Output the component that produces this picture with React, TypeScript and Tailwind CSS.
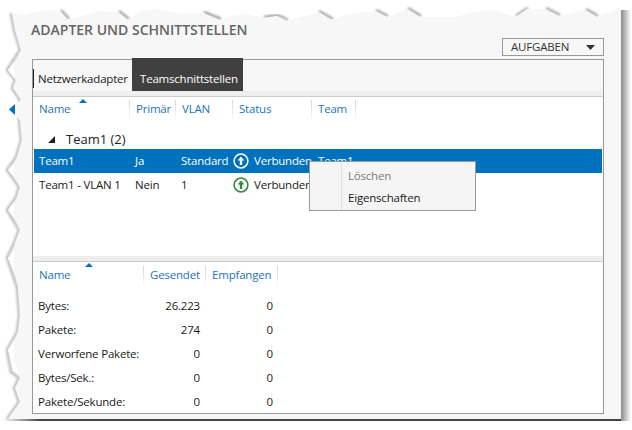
const font = "font-['Open_Sans','Liberation_Sans',sans-serif]";

const sheetEdge =
  "12,13 25,15 37,12 53,9 60,11 68,20 80,16 100,11 118,12 128,20 143,10 157,9 180,14 203,13 220,20 233,15 248,14 263,18 277,16 287,21 318,12 332,20 345,15 375,11 387,17 407,9 420,17 455,17 472,12 495,10 515,17 527,9 545,9 559,16 585,10 597,17 621,8 621,419 8,419 20,402 15,388 20,378 14,360 14,342 18,332 20,315 18,287 14,270 14,255 15,243 20,230 14,215 14,204 17,197 20,187 14,177 14,165 17,157 22,140 20,120 15,115 15,105 21,100 13,88 16,80 14,78 14,64 21,50 15,30";

const notches = [
  "14,62 8,70 14,78",
  "14,163 8,170 14,177",
  "14,202 8,210 14,218",
  "14,250 8,258 14,272",
  "14,340 8,350 14,372",
];

const topShadows = [
  "60,11 68,20",
  "118,12 128,20",
  "203,13 220,20",
  "263,18 277,16 287,21",
  "318,12 332,20",
  "375,11 387,17",
  "407,9 420,17",
  "515,17 527,9",
  "545,9 559,16",
  "585,10 597,17",
];

function TornSheet() {
  return (
    <svg className="absolute inset-0" width="632" height="430" viewBox="0 0 632 430">
      <defs>
        <filter id="soft" x="-20%" y="-20%" width="140%" height="140%">
          <feGaussianBlur stdDeviation="1.2" />
        </filter>
        <linearGradient id="rightShade" x1="0" x2="1" y1="0" y2="0">
          <stop offset="0" stopColor="#8a8a8a" />
          <stop offset="1" stopColor="#ffffff" />
        </linearGradient>
        <linearGradient id="bottomShade" x1="0" x2="1" y1="0" y2="0">
          <stop offset="0" stopColor="#ffffff" />
          <stop offset="0.06" stopColor="#444444" />
          <stop offset="1" stopColor="#444444" />
        </linearGradient>
      </defs>
      <rect x="621" y="10" width="10" height="411" fill="url(#rightShade)" />
      <rect x="3" y="419" width="618" height="2" fill="url(#bottomShade)" />
      <polyline
        points="12,13 15,30 21,50 8,70 16,80 13,88 21,100 20,120 22,140 17,157 8,170 20,187 17,197 8,210 20,230 15,243 8,258 18,287 20,315 18,332 8,350 12,372 20,378 15,388 20,402 8,419"
        fill="none"
        stroke="#b8b8b8"
        strokeWidth="2.5"
        filter="url(#soft)"
        transform="translate(-1 0)"
      />
      {topShadows.map((p) => (
        <polyline key={p} points={p} fill="none" stroke="#a0a0a0" strokeWidth="2.5" filter="url(#soft)" transform="translate(1 -1)" />
      ))}
      <polygon points={sheetEdge} fill="#f7f7f7" />
      {notches.map((p) => (
        <polygon key={p} points={p} fill="#ffffff" />
      ))}
      <polygon points="15,104 9,109.5 15,115" fill="#0072bc" />
    </svg>
  );
}

function ColHead({ label, width }: { label: string; width: string }) {
  return (
    <div className={`${width} flex shrink-0 justify-between pl-[6px] text-[#1b74bd]`}>
      <span className="whitespace-nowrap">{label}</span>
      <span className="w-px h-[22px] bg-gradient-to-b from-[#d4d4d4] to-white" />
    </div>
  );
}

function StatusIcon({ color }: { color: string }) {
  return (
    <svg width="16" height="16" viewBox="0 0 16 16" className="shrink-0">
      <circle cx="8" cy="8" r="6.9" fill="none" stroke={color} strokeWidth="1.5" />
      <path d="M8 3.6 L11.3 7.4 H9.2 V12 H6.8 V7.4 H4.7 Z" fill={color} />
    </svg>
  );
}

function TeamRow({ cells, selected }: { cells: string[]; selected?: boolean }) {
  return (
    <div className={`flex items-center h-6 shrink-0 pl-[5px] ${selected ? "bg-[#0072bd] text-white mx-px" : "text-[#1a1a1a] ml-px"}`}>
      <span className="w-[96px] whitespace-nowrap shrink-0">{cells[0]}</span>
      <span className="w-[46px] shrink-0">{cells[1]}</span>
      <span className="w-[52px] shrink-0">{cells[2]}</span>
      <StatusIcon color={selected ? "#ffffff" : "#2e8b38"} />
      <span className="ml-[5px] w-[64px] shrink-0">Verbunden</span>
      {selected && <span>Team1</span>}
    </div>
  );
}

function StatRow({ name, sent, recv }: { name: string; sent: string; recv: string }) {
  return (
    <div className="flex items-center h-6 pl-[5px] shrink-0 text-[#1a1a1a]">
      <span className="w-[105px] whitespace-nowrap shrink-0">{name}</span>
      <span className="w-[57px] text-right shrink-0">{sent}</span>
      <span className="w-[73px] text-right shrink-0">{recv}</span>
    </div>
  );
}

export default function App() {
  return (
    <div className={`relative w-[632px] h-[430px] overflow-hidden bg-white text-[11.5px] tracking-[-0.2px] ${font}`}>
      <TornSheet />
      <div className="relative flex flex-col h-full pl-[32px] pr-[28px] pt-[21px]">
        <h1 className="h-[18px] leading-[18px] text-[14px] font-semibold tracking-normal text-[#666666] -ml-px whitespace-nowrap">ADAPTER UND SCHNITTSTELLEN</h1>
        <div className="flex justify-end h-[18px] mt-[-1px]">
          <button className="flex items-center justify-between w-[102px] border border-[#999999] pl-[8px] pr-[8px] text-[#333333]">
            <span>AUFGABEN</span>
            <svg width="9" height="5" viewBox="0 0 9 5">
              <path d="M0 0 H9 L4.5 5 Z" fill="#333333" />
            </svg>
          </button>
        </div>
        <div className="relative flex flex-col h-[355px] mt-[3px] border border-[#999999] bg-white">
          <div className="flex h-[31px] shrink-0 bg-[#f7f7f7]">
            <div className="flex items-center h-[19px] mt-[9px] pl-[4px] w-[99px] border-l border-[#222222] whitespace-nowrap text-[#222222]">
              Netzwerkadapter
            </div>
            <div className="flex items-center w-[111px] h-[33px] -mt-[2px] pl-[8px] pt-[9px] bg-[#404040] text-white whitespace-nowrap">
              Teamschnittstellen
            </div>
          </div>
          <div className="h-[6px] shrink-0 bg-[#eeeeee] border-b border-[#cccccc]" />

          <div className="relative flex h-[25px] shrink-0 pt-[3px]">
            <ColHead label="Name" width="w-[97px]" />
            <ColHead label="Primär" width="w-[46px]" />
            <ColHead label="VLAN" width="w-[57px]" />
            <ColHead label="Status" width="w-[79px]" />
            <ColHead label="Team" width="w-[44px]" />
            <span className="absolute left-[46px] top-[2px] w-0 h-0 border-x-[4px] border-x-transparent border-b-[4px] border-b-[#0072bc]" />
          </div>

          <div className="flex items-center h-[27px] shrink-0 pl-[15px] pt-[8px] text-[13px] tracking-normal text-[#222222]">
            <span className="w-0 h-0 mr-[11px] border-l-[7px] border-l-transparent border-b-[7px] border-b-[#222222]" />
            Team1 (2)
          </div>
          <TeamRow selected cells={["Team1", "Ja", "Standard"]} />
          <TeamRow cells={["Team1 - VLAN 1", "Nein", "1"]} />

          <div className="flex-1" />
          <div className="h-[6px] shrink-0 bg-[#eeeeee] border-b border-[#cccccc]" />

          <div className="relative flex h-[32px] shrink-0 pt-[4px]">
            <ColHead label="Name" width="w-[111px]" />
            <ColHead label="Gesendet" width="w-[62px]" />
            <ColHead label="Empfangen" width="w-[72px]" />
            <span className="absolute left-[52px] top-[1px] w-0 h-0 border-x-[4px] border-x-transparent border-b-[4px] border-b-[#0072bc]" />
          </div>
          <div className="h-[120px] shrink-0 overflow-hidden -mb-[1px]">
            <StatRow name="Bytes:" sent="26.223" recv="0" />
            <StatRow name="Pakete:" sent="274" recv="0" />
            <StatRow name="Verworfene Pakete:" sent="0" recv="0" />
            <StatRow name="Bytes/Sek.:" sent="0" recv="0" />
            <StatRow name="Pakete/Sekunde:" sent="0" recv="0" />
          </div>

          <div className="absolute left-[276px] top-[101px] w-[167px] h-[50px] border border-[#999999] bg-[#f5f5f5] flex">
            <div className="w-[32px] border-r border-[#e3e3e3]" />
            <div className="flex flex-col pl-[6px] pt-[3px]">
              <span className="h-[22px] leading-[22px] text-[#7a7a7a]">Löschen</span>
              <span className="h-[22px] leading-[22px] text-[#1a1a1a]">Eigenschaften</span>
            </div>
          </div>
        </div>
      </div>
    </div>
  );
}
